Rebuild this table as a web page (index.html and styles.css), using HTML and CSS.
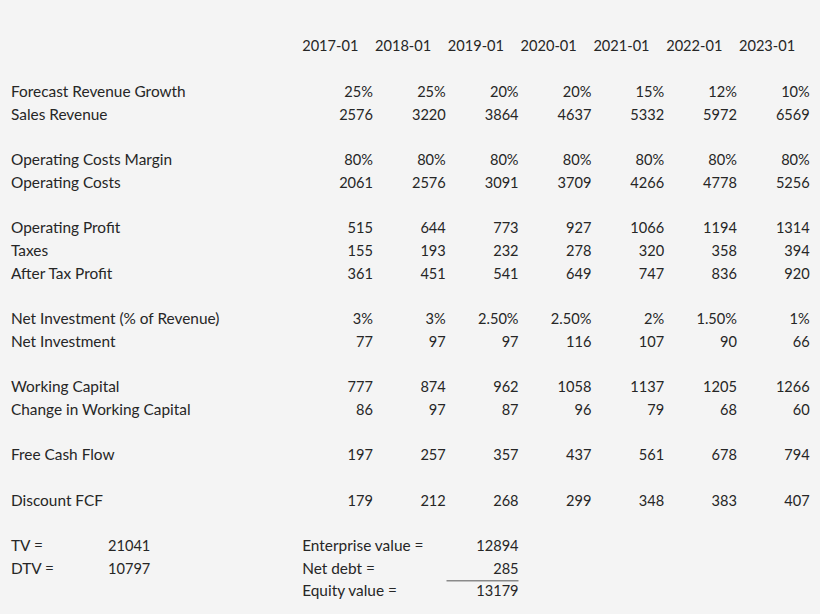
FILE: index.html
```html
<!DOCTYPE html>
<html>
<head>
<meta charset="utf-8">
<link rel="stylesheet" href="styles.css">
</head>
<body>
<div class="sheet">
  <div class="row head">
    <span class="a"></span><span class="b"></span>
    <span>2017-01</span><span>2018-01</span><span>2019-01</span><span>2020-01</span><span>2021-01</span><span>2022-01</span><span>2023-01</span>
  </div>
  <div class="spacer"></div>
  <div class="row"><span class="label">Forecast Revenue Growth</span><span>25%</span><span>25%</span><span>20%</span><span>20%</span><span>15%</span><span>12%</span><span>10%</span></div>
  <div class="row"><span class="label">Sales Revenue</span><span>2576</span><span>3220</span><span>3864</span><span>4637</span><span>5332</span><span>5972</span><span>6569</span></div>
  <div class="spacer"></div>
  <div class="row"><span class="label">Operating Costs Margin</span><span>80%</span><span>80%</span><span>80%</span><span>80%</span><span>80%</span><span>80%</span><span>80%</span></div>
  <div class="row"><span class="label">Operating Costs</span><span>2061</span><span>2576</span><span>3091</span><span>3709</span><span>4266</span><span>4778</span><span>5256</span></div>
  <div class="spacer"></div>
  <div class="row"><span class="label">Operating Profit</span><span>515</span><span>644</span><span>773</span><span>927</span><span>1066</span><span>1194</span><span>1314</span></div>
  <div class="row"><span class="label">Taxes</span><span>155</span><span>193</span><span>232</span><span>278</span><span>320</span><span>358</span><span>394</span></div>
  <div class="row"><span class="label">After Tax Profit</span><span>361</span><span>451</span><span>541</span><span>649</span><span>747</span><span>836</span><span>920</span></div>
  <div class="spacer"></div>
  <div class="row"><span class="label">Net Investment (% of Revenue)</span><span>3%</span><span>3%</span><span>2.50%</span><span>2.50%</span><span>2%</span><span>1.50%</span><span>1%</span></div>
  <div class="row"><span class="label">Net Investment</span><span>77</span><span>97</span><span>97</span><span>116</span><span>107</span><span>90</span><span>66</span></div>
  <div class="spacer"></div>
  <div class="row"><span class="label">Working Capital</span><span>777</span><span>874</span><span>962</span><span>1058</span><span>1137</span><span>1205</span><span>1266</span></div>
  <div class="row"><span class="label">Change in Working Capital</span><span>86</span><span>97</span><span>87</span><span>96</span><span>79</span><span>68</span><span>60</span></div>
  <div class="spacer"></div>
  <div class="row"><span class="label">Free Cash Flow</span><span>197</span><span>257</span><span>357</span><span>437</span><span>561</span><span>678</span><span>794</span></div>
  <div class="spacer"></div>
  <div class="row"><span class="label">Discount FCF</span><span>179</span><span>212</span><span>268</span><span>299</span><span>348</span><span>383</span><span>407</span></div>
  <div class="spacer"></div>
  <div class="row"><span class="a">TV =</span><span class="b">21041</span><span class="text2">Enterprise value =</span><span>12894</span></div>
  <div class="row"><span class="a">DTV =</span><span class="b">10797</span><span class="text2">Net debt =</span><span class="ruled">285</span></div>
  <div class="row"><span class="a"></span><span class="b"></span><span class="text2">Equity value =</span><span>13179</span></div>
</div>
</body>
</html>
```

FILE: styles.css
```css
html, body {
  margin: 0;
  padding: 0;
  background: #f4f4f4;
}

.sheet {
  width: 820px;
  height: 614px;
  box-sizing: border-box;
  padding: 34.8px 10px 0 11px;
  font-family: Lato, "Open Sans", sans-serif;
  font-size: 14.6px;
  color: #262626;
  display: flex;
  flex-direction: column;
}

.row {
  display: grid;
  grid-template-columns: 97px 192.2px repeat(7, 72.8px);
  align-items: baseline;
  height: 22.7px;
  line-height: 22.7px;
  white-space: nowrap;
}

.row > span {
  text-align: right;
}

.head > span {
  text-align: left;
  padding-left: 2px;
}

.row > .a,
.row > .label,
.row > .text2 {
  text-align: left;
  font-size: 15.4px;
}

.row > .b {
  text-align: left;
}

.row > .label {
  grid-column: 1 / 3;
}

.row > .text2 {
  grid-column: 3 / 5;
  padding-left: 2px;
}

.ruled {
  box-shadow: 0 2px 0 -0.5px #8a8a8a;
}

.spacer {
  height: 22.7px;
  flex: none;
}
```
